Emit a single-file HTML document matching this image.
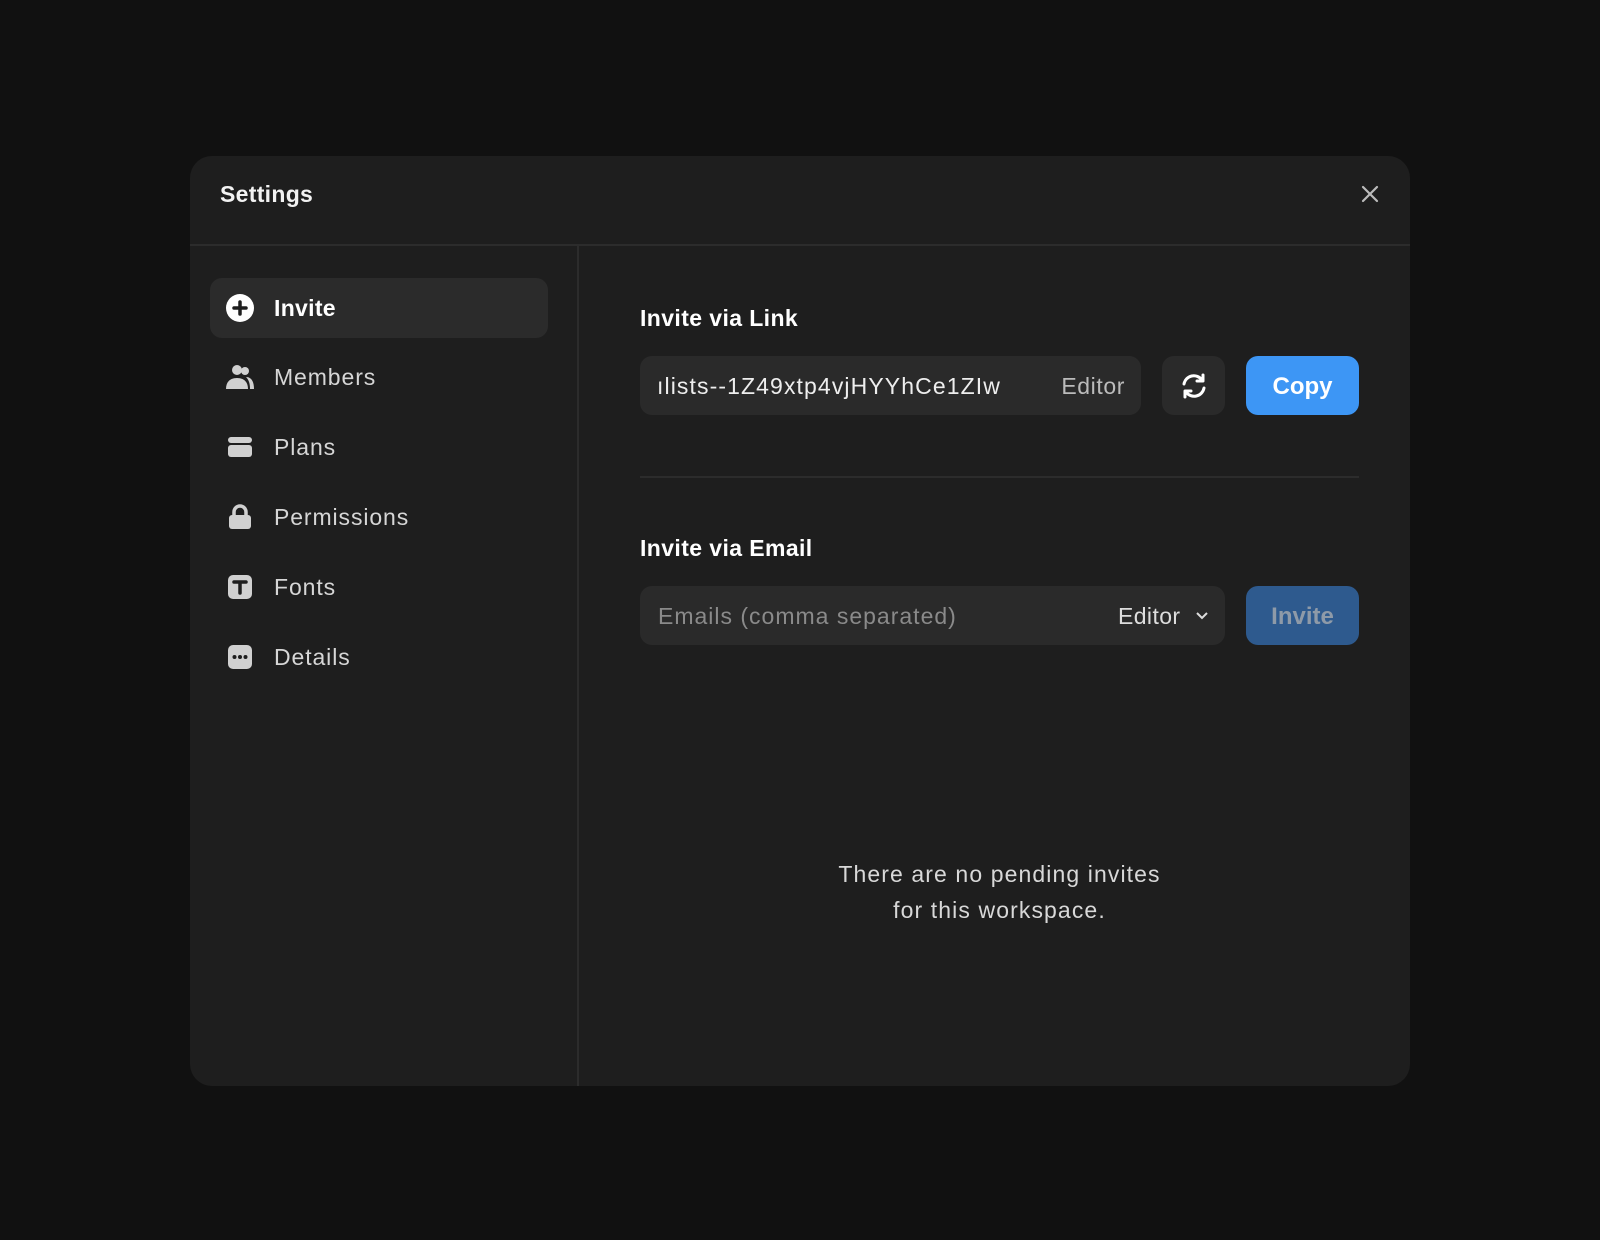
<!DOCTYPE html>
<html><head><style>
*{box-sizing:border-box;margin:0;padding:0}
body{width:1600px;height:1240px;background:#111111;font-family:"Liberation Sans",sans-serif;position:relative;overflow:hidden}
.modal{position:absolute;left:190px;top:156px;width:1220px;height:930px;background:#1e1e1e;border-radius:22px;overflow:hidden}
.hdr{position:absolute;left:0;top:0;right:0;height:90px;border-bottom:2px solid #2c2c2c}
.title{position:absolute;left:30px;top:25px;color:#f2f2f2;font-size:23px;font-weight:bold;letter-spacing:0.3px}
.side{position:absolute;left:0;top:90px;width:389px;bottom:0;border-right:2px solid #2c2c2c}
.nav{position:absolute;left:20px;width:338px;height:60px;border-radius:12px;color:#d6d6d6;font-size:23px;letter-spacing:0.9px}
.nav.active{background:#2b2b2b;color:#fff;font-weight:bold;letter-spacing:0.3px}
.nav svg{position:absolute;left:16px;top:16px}
.nav span{position:absolute;left:64px;top:17px}
.abs{position:absolute}
.h{color:#fff;font-size:23px;font-weight:bold;letter-spacing:0.4px}
.box{background:#2a2a2a;border-radius:12px}
</style></head><body>
<div class="modal">
 <div class="hdr"><div class="title">Settings</div>
  <svg class="abs" style="left:1170px;top:28px" width="20" height="20" viewBox="0 0 20 20"><path d="M3 3L17 17M17 3L3 17" stroke="#bbb" stroke-width="2.2" stroke-linecap="round"/></svg>
 </div>
 <div class="side">
  <div class="nav active" style="top:32px"><svg width="28" height="28" viewBox="0 0 28 28"><circle cx="14" cy="14" r="14" fill="#fff"/><path d="M14 8v12M8 14h12" stroke="#1e1e1e" stroke-width="3.5" stroke-linecap="round"/></svg><span>Invite</span></div>
  <div class="nav" style="top:101px"><svg width="28" height="28" viewBox="0 0 28 28" fill="#d0d0d0"><circle cx="11" cy="7" r="5"/><circle cx="19" cy="8" r="4"/><path d="M0 26c0-7 4-11 11-11s11 4 11 11z"/><path d="M20 14c5 0 8 4 8 12h-4c0-5-1-9-4-12z"/></svg><span>Members</span></div>
  <div class="nav" style="top:171px"><svg width="28" height="28" viewBox="0 0 28 28" fill="#d0d0d0"><rect x="2" y="4" width="24" height="6" rx="3"/><rect x="2" y="12" width="24" height="12" rx="3"/></svg><span>Plans</span></div>
  <div class="nav" style="top:241px"><svg width="28" height="28" viewBox="0 0 28 28" fill="#d0d0d0"><path d="M8 12V9a6 6 0 0 1 12 0v3" stroke="#d0d0d0" stroke-width="3.5" fill="none"/><rect x="3" y="12" width="22" height="14" rx="3"/></svg><span>Permissions</span></div>
  <div class="nav" style="top:311px"><svg width="28" height="28" viewBox="0 0 28 28"><rect x="2" y="2" width="24" height="24" rx="5" fill="#d0d0d0"/><path d="M8 9h12M14 9v11" stroke="#1e1e1e" stroke-width="3.5" stroke-linecap="round"/></svg><span>Fonts</span></div>
  <div class="nav" style="top:381px"><svg width="28" height="28" viewBox="0 0 28 28"><rect x="2" y="2" width="24" height="24" rx="5" fill="#d0d0d0"/><circle cx="8.5" cy="14" r="2" fill="#1e1e1e"/><circle cx="14" cy="14" r="2" fill="#1e1e1e"/><circle cx="19.5" cy="14" r="2" fill="#1e1e1e"/></svg><span>Details</span></div>
 </div>
 <div class="abs h" style="left:450px;top:149px">Invite via Link</div>
 <div class="abs box" style="left:450px;top:200px;width:501px;height:59px;overflow:hidden">
  <div class="abs" style="left:17px;top:17px;color:#eee;font-size:23px;white-space:nowrap;letter-spacing:1.1px">ılists--1Z49xtp4vjHYYhCe1ZIw</div>
  <div class="abs" style="right:0;top:0;width:120px;height:59px;background:#2a2a2a"></div>
  <div class="abs" style="right:16px;top:17px;color:#bbb;font-size:23px;letter-spacing:0.6px">Editor</div>
 </div>
 <div class="abs box" style="left:972px;top:200px;width:63px;height:59px">
  <svg class="abs" style="left:17px;top:15px" width="30" height="30" viewBox="0 0 30 30" fill="none" stroke="#fff" stroke-width="3" stroke-linecap="round" stroke-linejoin="round"><path d="M5 13a10 10 0 0 1 18-4"/><path d="M25 17a10 10 0 0 1-18 4"/><path d="M24 4v6h-6"/><path d="M6 26v-6h6"/></svg>
 </div>
 <div class="abs" style="left:1056px;top:200px;width:113px;height:59px;background:#3d96f5;border-radius:12px;color:#fff;font-size:24px;font-weight:bold;text-align:center;line-height:61px">Copy</div>
 <div class="abs" style="left:450px;top:320px;width:719px;height:2px;background:#2c2c2c"></div>
 <div class="abs h" style="left:450px;top:379px">Invite via Email</div>
 <div class="abs box" style="left:450px;top:430px;width:585px;height:59px">
  <div class="abs" style="left:18px;top:17px;color:#8a8a8a;font-size:23px;letter-spacing:1px">Emails (comma separated)</div>
  <div class="abs" style="left:478px;top:17px;color:#ddd;font-size:23px;letter-spacing:0.4px">Editor</div>
  <svg class="abs" style="left:555px;top:25px" width="14" height="10" viewBox="0 0 14 10"><path d="M2 2l5 5 5-5" stroke="#ddd" stroke-width="2" fill="none"/></svg>
 </div>
 <div class="abs" style="left:1056px;top:430px;width:113px;height:59px;background:#2e5a8e;border-radius:12px;color:#8e9aa8;font-size:24px;font-weight:bold;text-align:center;line-height:61px">Invite</div>
 <div class="abs" style="left:450px;top:700px;width:719px;text-align:center;color:#d8d8d8;font-size:23px;line-height:36px;letter-spacing:1.1px">There are no pending invites<br>for this workspace.</div>
</div>
</body></html>
